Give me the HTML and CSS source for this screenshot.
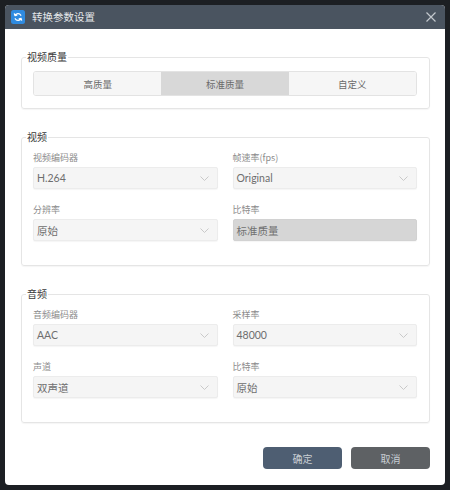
FILE: index.html
```html
<!DOCTYPE html>
<html lang="zh">
<head>
<meta charset="utf-8">
<title>转换参数设置</title>
<link rel="stylesheet" href="styles.css">
</head>
<body>
<div class="dialog">
  <div class="titlebar">
    <svg class="logo" width="14" height="14" viewBox="0 0 14 14">
      <rect width="14" height="14" rx="2.5" fill="#2f8be0"/>
      <path d="M9.8 5.2 A3.2 3.2 0 0 0 4 5.6 M4 5.6 L3.4 3.9 M4 5.6 L5.8 5.1" fill="none" stroke="#fff" stroke-width="1.3" stroke-linecap="round"/>
      <path d="M4.2 8.8 A3.2 3.2 0 0 0 10 8.4 M10 8.4 L10.6 10.1 M10 8.4 L8.2 8.9" fill="none" stroke="#fff" stroke-width="1.3" stroke-linecap="round"/>
    </svg>
    <span class="title">转换参数设置</span>
    <svg class="close" width="10" height="10" viewBox="0 0 10 10">
      <path d="M0.5 0.5 L9.5 9.5 M9.5 0.5 L0.5 9.5" stroke="#c3c8cd" stroke-width="1.2"/>
    </svg>
  </div>
  <div class="content">
    <fieldset class="group g-quality">
      <legend>视频质量</legend>
      <div class="seg">
        <div class="seg-item">高质量</div>
        <div class="seg-item active">标准质量</div>
        <div class="seg-item">自定义</div>
      </div>
    </fieldset>

    <fieldset class="group">
      <legend>视频</legend>
      <div class="grid">
        <div class="field">
          <div class="label">视频编码器</div>
          <div class="select"><span class="val">H.264</span><svg class="chev" width="9" height="5" viewBox="0 0 9 5"><polyline points="0.5,0.5 4.5,4.5 8.5,0.5" fill="none" stroke="#c9c9c9" stroke-width="1"/></svg></div>
        </div>
        <div class="field">
          <div class="label">帧速率(fps)</div>
          <div class="select"><span class="val">Original</span><svg class="chev" width="9" height="5" viewBox="0 0 9 5"><polyline points="0.5,0.5 4.5,4.5 8.5,0.5" fill="none" stroke="#c9c9c9" stroke-width="1"/></svg></div>
        </div>
        <div class="field">
          <div class="label">分辨率</div>
          <div class="select"><span class="val">原始</span><svg class="chev" width="9" height="5" viewBox="0 0 9 5"><polyline points="0.5,0.5 4.5,4.5 8.5,0.5" fill="none" stroke="#c9c9c9" stroke-width="1"/></svg></div>
        </div>
        <div class="field">
          <div class="label">比特率</div>
          <div class="select disabled"><span class="val">标准质量</span></div>
        </div>
      </div>
    </fieldset>

    <fieldset class="group">
      <legend>音频</legend>
      <div class="grid">
        <div class="field">
          <div class="label">音频编码器</div>
          <div class="select"><span class="val">AAC</span><svg class="chev" width="9" height="5" viewBox="0 0 9 5"><polyline points="0.5,0.5 4.5,4.5 8.5,0.5" fill="none" stroke="#c9c9c9" stroke-width="1"/></svg></div>
        </div>
        <div class="field">
          <div class="label">采样率</div>
          <div class="select"><span class="val">48000</span><svg class="chev" width="9" height="5" viewBox="0 0 9 5"><polyline points="0.5,0.5 4.5,4.5 8.5,0.5" fill="none" stroke="#c9c9c9" stroke-width="1"/></svg></div>
        </div>
        <div class="field">
          <div class="label">声道</div>
          <div class="select"><span class="val">双声道</span><svg class="chev" width="9" height="5" viewBox="0 0 9 5"><polyline points="0.5,0.5 4.5,4.5 8.5,0.5" fill="none" stroke="#c9c9c9" stroke-width="1"/></svg></div>
        </div>
        <div class="field">
          <div class="label">比特率</div>
          <div class="select"><span class="val">原始</span><svg class="chev" width="9" height="5" viewBox="0 0 9 5"><polyline points="0.5,0.5 4.5,4.5 8.5,0.5" fill="none" stroke="#c9c9c9" stroke-width="1"/></svg></div>
        </div>
      </div>
    </fieldset>

    <div class="footer">
      <button class="btn ok">确定</button>
      <button class="btn cancel">取消</button>
    </div>
  </div>
</div>
</body>
</html>
```

FILE: styles.css
```css
html, body {
  margin: 0;
  padding: 0;
}
body {
  width: 450px;
  height: 490px;
  background: #1c1f23;
  font-family: "Noto Sans CJK SC", "Noto Sans", sans-serif;
  overflow: hidden;
}
.dialog {
  margin: 5px;
  width: 440px;
  height: 480px;
  background: #ffffff;
  border-radius: 4px;
  overflow: hidden;
  display: flex;
  flex-direction: column;
}
.titlebar {
  height: 24px;
  background: #4a5460;
  display: flex;
  align-items: center;
  padding: 0 7px 0 6px;
  flex: none;
}
.logo {
  display: block;
  flex: none;
}
.title {
  margin-left: 7px;
  color: #e4e7ea;
  font-size: 10.5px;
  line-height: 14px;
  flex: 1;
}
.close {
  display: block;
  margin-right: 2px;
}
.content {
  padding: 20px 15px 0 16px;
  display: flex;
  flex-direction: column;
  gap: 20px;
}
.group {
  margin: 0;
  padding: 6px 12px 24px 11px;
  border: 1px solid #e5e5e5;
  border-radius: 3px;
  min-width: 0;
  box-shadow: 0 1px 1px rgba(0,0,0,0.04);
}
.g-quality {
  padding-bottom: 12px;
}
.group legend {
  padding: 0 1px;
  margin-left: -7px;
  font-size: 10px;
  line-height: 16px;
  color: #3a3a3a;
}
.seg {
  display: flex;
  height: 25px;
  border: 1px solid #e3e3e3;
  border-radius: 3px;
  overflow: hidden;
  box-sizing: border-box;
}
.seg-item {
  flex: 1;
  display: flex;
  align-items: center;
  justify-content: center;
  background: #f6f6f6;
  color: #6a6a6a;
  font-size: 9.5px;
}
.seg-item.active {
  background: #d8d8d8;
}
.grid {
  display: grid;
  grid-template-columns: 1fr 1fr;
  column-gap: 15px;
  row-gap: 14px;
}
.label {
  font-size: 9px;
  line-height: 14px;
  color: #8c8c8c;
  margin-bottom: 2px;
}
.select {
  height: 22px;
  box-sizing: border-box;
  background: #f5f5f5;
  border: 1px solid #ececec;
  border-radius: 2px;
  box-shadow: 0 1px 1px rgba(0,0,0,0.04);
  display: flex;
  align-items: center;
  padding: 0 8px 0 3px;
}
.select .val {
  flex: 1;
  font-family: "Lato", "Noto Sans CJK SC", sans-serif;
  font-size: 10.5px;
  color: #6e6e6e;
}
.select.disabled {
  background: #d6d6d6;
  border-color: #d2d2d2;
}
.select.disabled .val {
  color: #707070;
}
.chev {
  display: block;
  flex: none;
}
.footer {
  display: flex;
  justify-content: flex-end;
  gap: 9px;
  margin-top: 4px;
}
.btn {
  width: 79px;
  height: 22px;
  border: none;
  border-radius: 4px;
  color: #c9ced4;
  font-family: "Noto Sans CJK SC", sans-serif;
  font-size: 10px;
  padding: 0;
}
.btn.ok {
  background: #4e5e72;
}
.btn.cancel {
  background: #5e6164;
}
```
